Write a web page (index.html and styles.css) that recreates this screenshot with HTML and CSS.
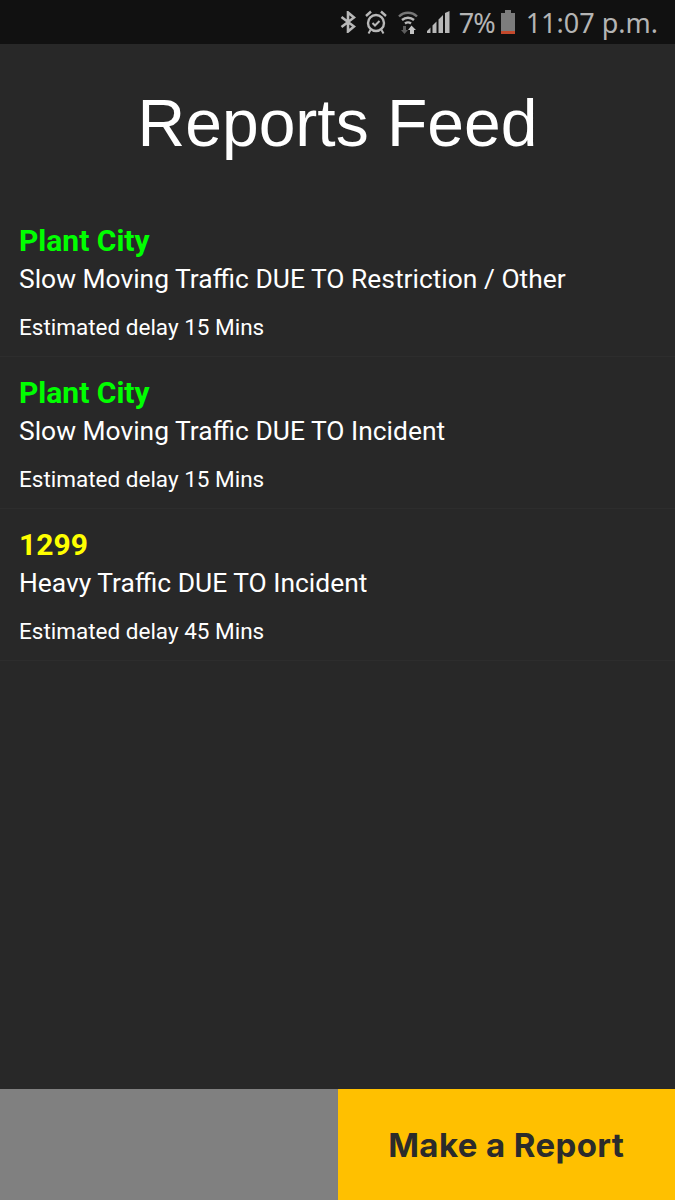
FILE: index.html
```html
<!DOCTYPE html>
<html lang="en">
<head>
  <meta charset="UTF-8" />
  <meta name="viewport" content="width=device-width, initial-scale=1.0" />
  <title>Reports Feed</title>
  <link rel="stylesheet" href="styles.css">
</head>
<body>
  <div class="status-bar">
    <svg class="icon icon-bt" width="16" height="22" viewBox="0 0 16 22"><path d="M1.500 6L14 15.500L8 20.500V1.500L14 6.500L1.500 16" fill="none" stroke="#b8b8b8" stroke-width="2.600"/></svg>
    <svg class="icon icon-alarm" width="22" height="24" viewBox="0 0 22 24"><circle cx="11" cy="13" r="8" fill="none" stroke="#b8b8b8" stroke-width="2.400"/><path d="M7.500 13l2.500 2.500 4.500-4.500" fill="none" stroke="#b8b8b8" stroke-width="2"/><path d="M1 6L6 1.500M21 6L16 1.500" fill="none" stroke="#b8b8b8" stroke-width="2.400"/><path d="M5.500 20l-2 3.500M16.500 20l2 3.500" fill="none" stroke="#b8b8b8" stroke-width="2"/></svg>
    <svg class="icon icon-wifi" width="20" height="24" viewBox="0 0 20 24"><path d="M1 6.500C6 1.500 14 1.500 19 6.500" fill="none" stroke="#777" stroke-width="2.400"/><path d="M4 10C7.500 7 12.500 7 16 10" fill="none" stroke="#b8b8b8" stroke-width="2.400"/><path d="M7 13.500C9 12 11 12 13 13.500" fill="none" stroke="#b8b8b8" stroke-width="2.400"/><path d="M5 16h3v4h2l-3.500 4L3 20h2z" fill="#5c5c5c"/><path d="M12 24v-4h-2l3.500-4.500L18 20h-2v4z" fill="#c4c4c4"/></svg>
    <svg class="icon icon-signal" width="23" height="22" viewBox="0 0 23 22"><path d="M0 22v-2l3.500-3.500V22zM5.500 22v-7.500l4-4V22zM11.500 22V8.500l4.500-4.500V22zM18 22V2l4.500-2V22z" fill="#b8b8b8"/></svg>
    <span class="battery-pct">7%</span>
    <svg class="icon icon-battery" width="16" height="26" viewBox="0 0 16 26"><path d="M5 1h6v3h4v21H1V4h4z" fill="#7c7c7c"/><rect x="1" y="22" width="14" height="3" fill="#c4492c"/></svg>
    <span class="clock">11:07 p.m.</span>
  </div>

  <h1 class="title">Reports Feed</h1>

  <div class="feed">
    <div class="report">
      <div class="place green">Plant City</div>
      <div class="desc">Slow Moving Traffic DUE TO Restriction / Other</div>
      <div class="delay">Estimated delay 15 Mins</div>
    </div>
    <div class="report">
      <div class="place green">Plant City</div>
      <div class="desc">Slow Moving Traffic DUE TO Incident</div>
      <div class="delay">Estimated delay 15 Mins</div>
    </div>
    <div class="report">
      <div class="place yellow">1299</div>
      <div class="desc">Heavy Traffic DUE TO Incident</div>
      <div class="delay">Estimated delay 45 Mins</div>
    </div>
  </div>

  <div class="bottom-bar">
    <div class="bottom-empty"></div>
    <div class="bottom-btn">Make a Report</div>
  </div>
</body>
</html>
```
FILE: styles.css
```css
html, body {
  height: 100%;
}
body {
  margin: 0;
  height: 1200px;
  overflow: hidden;
  display: flex;
  flex-direction: column;
  background-color: #282828;
  font-family: Roboto, sans-serif;
  color: #fff;
}
.status-bar {
  height: 44px;
  flex: none;
  display: flex;
  align-items: center;
  justify-content: flex-end;
  padding-right: 17px;
  background-color: #111;
  color: #b4b4b4;
  font-family: "Noto Sans", sans-serif;
  font-size: 27px;
}
.icon {
  flex: none;
}
.icon-bt {
  margin-right: 9px;
}
.icon-alarm {
  margin-right: 11px;
}
.icon-wifi {
  margin-right: 9px;
}
.icon-signal {
  margin-right: 9px;
}
.battery-pct {
  letter-spacing: -1px;
  margin-right: 5px;
}
.icon-battery {
  margin-right: 10px;
}
.title {
  margin: 43px 0 0;
  height: 118px;
  text-align: center;
  font-family: "Liberation Sans", Arial, sans-serif;
  font-weight: normal;
  font-size: 66px;
  line-height: 72px;
}
.feed {
  flex: 1;
}
.report {
  height: 152px;
  box-sizing: border-box;
  padding: 19px 19px 0;
  border-bottom: 1px solid #2d2d2d;
}
.place {
  font-size: 30px;
  font-weight: bold;
  line-height: 34px;
}
.green {
  color: #00ff00;
}
.yellow {
  color: #ffff00;
}
.desc {
  font-size: 26.400px;
  line-height: 42px;
}
.delay {
  font-size: 22.500px;
  line-height: 30px;
  margin-top: 12px;
}
.bottom-bar {
  height: 111px;
  flex: none;
  display: flex;
}
.bottom-empty {
  flex: 1;
  background-color: #808080;
}
.bottom-btn {
  flex: 1;
  display: flex;
  align-items: center;
  justify-content: center;
  background-color: #ffc000;
  color: #2b2b2b;
  font-family: Inter, "Liberation Sans", sans-serif;
  font-weight: 700;
  font-size: 33px;
  letter-spacing: 0.400px;
}
```
